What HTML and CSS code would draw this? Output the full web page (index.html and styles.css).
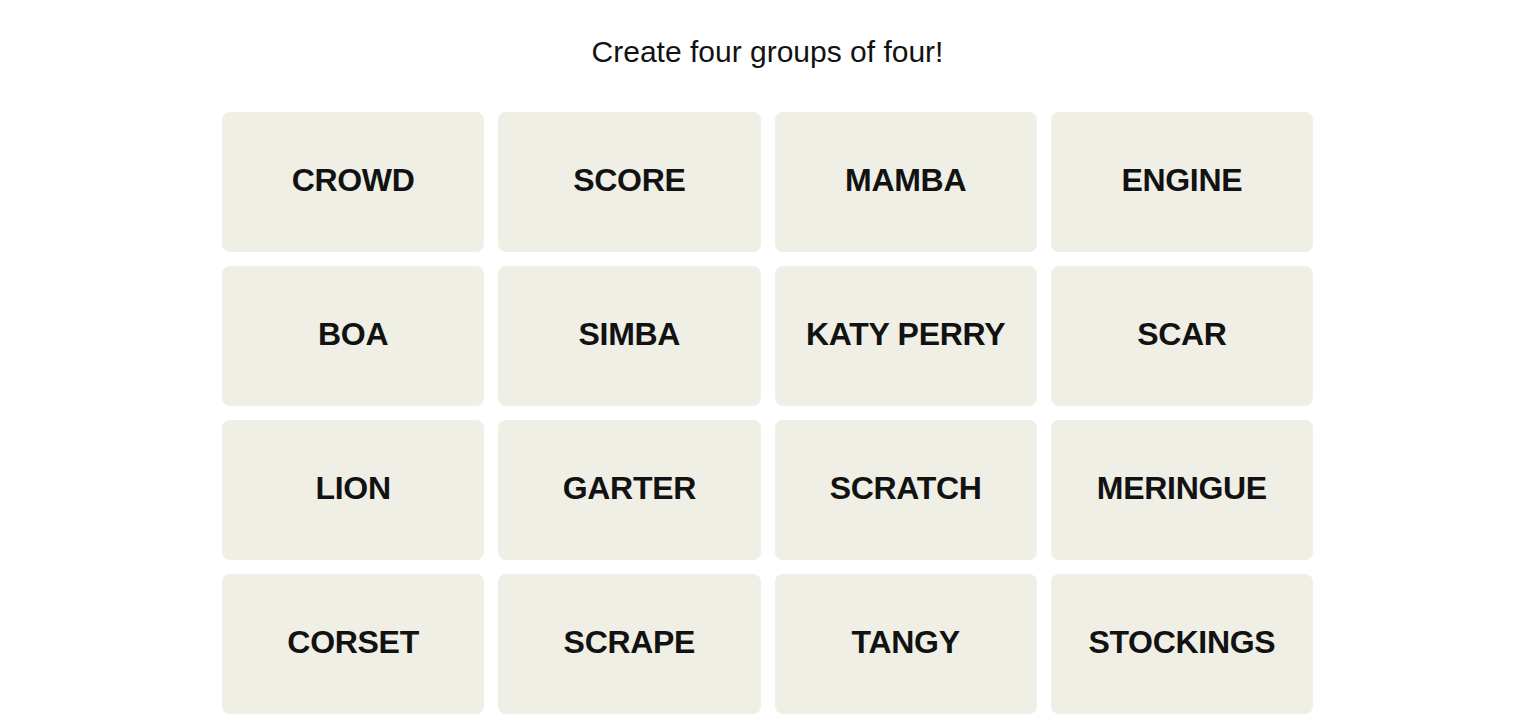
FILE: index.html
```html
<!DOCTYPE html>
<html lang="en">
<head>
<meta charset="utf-8">
<title>Connections</title>
<link rel="stylesheet" href="styles.css">
</head>
<body>
<main class="game">
  <h1 class="prompt">Create four groups of four!</h1>
  <div class="board">
    <button class="tile">CROWD</button>
    <button class="tile">SCORE</button>
    <button class="tile">MAMBA</button>
    <button class="tile">ENGINE</button>
    <button class="tile">BOA</button>
    <button class="tile">SIMBA</button>
    <button class="tile">KATY PERRY</button>
    <button class="tile">SCAR</button>
    <button class="tile">LION</button>
    <button class="tile">GARTER</button>
    <button class="tile">SCRATCH</button>
    <button class="tile">MERINGUE</button>
    <button class="tile">CORSET</button>
    <button class="tile">SCRAPE</button>
    <button class="tile">TANGY</button>
    <button class="tile">STOCKINGS</button>
  </div>
</main>
</body>
</html>
```
FILE: styles.css
```css
html, body {
  margin: 0;
  padding: 0;
  background: #ffffff;
  color: #121212;
  font-family: "Liberation Sans", Arial, sans-serif;
}

.game {
  display: flex;
  flex-direction: column;
  align-items: center;
  padding: 0 0 0 5px;
}

.prompt {
  margin: 33px 0 0;
  font-size: 30px;
  line-height: 37px;
  font-weight: 400;
  letter-spacing: 0;
  color: #121212;
}

.board {
  margin-top: 42px;
  width: 1091px;
  display: grid;
  grid-template-columns: repeat(4, 1fr);
  grid-auto-rows: 140px;
  column-gap: 14px;
  row-gap: 14px;
}

.tile {
  border: none;
  border-radius: 8px;
  background: #efefe6;
  color: #121212;
  font-family: "Liberation Sans", Arial, sans-serif;
  font-weight: 700;
  font-size: 32px;
  letter-spacing: -0.3px;
  padding: 0 0 4px;
  margin: 0;
  cursor: pointer;
  display: flex;
  align-items: center;
  justify-content: center;
}
```
